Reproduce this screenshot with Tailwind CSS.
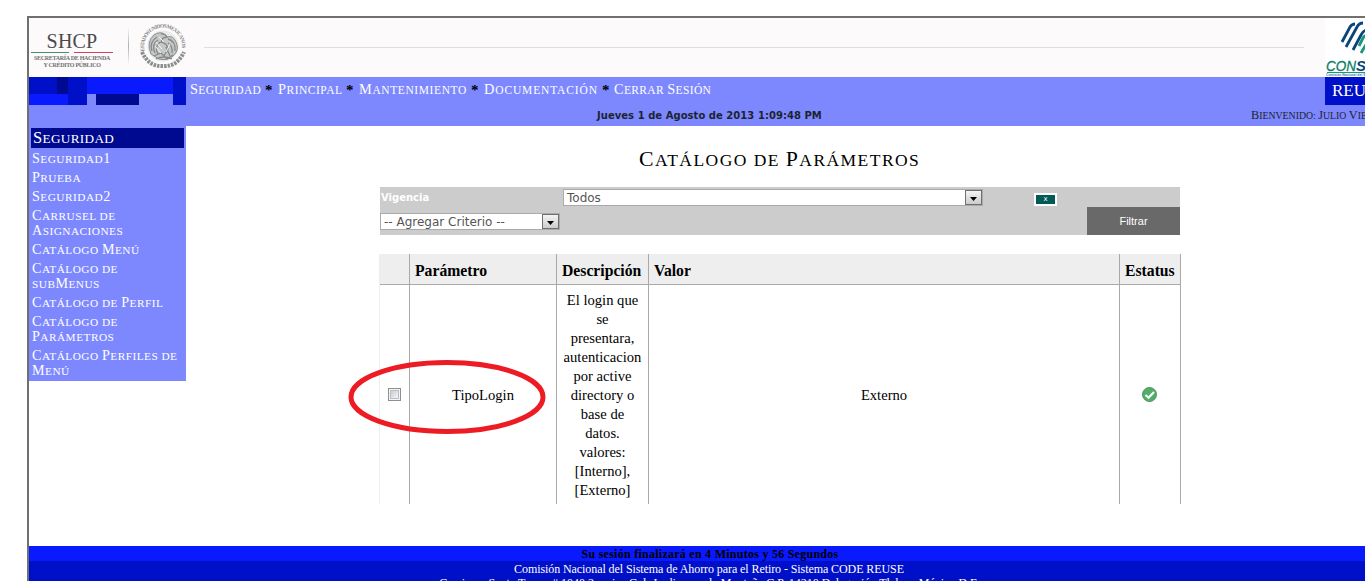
<!DOCTYPE html>
<html lang="es">
<head>
<meta charset="utf-8">
<title>Catálogo de Parámetros</title>
<script src="https://cdn.jsdelivr.net/npm/@tailwindcss/browser@4"></script>
</head>
<body class="h-[581px] w-[1365px] overflow-hidden bg-white pl-[27px] pt-4 font-['Liberation_Serif',serif] text-black">
<div class="relative flex h-[565px] w-[1338px] flex-col overflow-hidden border-l-2 border-t-2 border-[#707070]">

  <header class="flex h-[59px] shrink-0 bg-[#fcfafb]">
    <div class="w-[84px] shrink-0 pl-[2px] pt-[13px] text-center text-[#4a4a4a]">
      <div class="text-[20px] leading-[21px] tracking-[0.2px]">SHCP</div>
      <div class="flex justify-between"><i class="h-px w-[38px] bg-[#3f9468]"></i><i class="h-px w-[39px] bg-[#d4405f]"></i></div>
      <div class="whitespace-nowrap pt-[2px] text-[6px] font-bold leading-[6.500px] tracking-[-0.3px] text-[#707070]">SECRETARÍA DE HACIENDA<br>Y CRÉDITO PÚBLICO</div>
    </div>
    <div class="ml-[15px] mt-[9px] h-[38px] w-px shrink-0 bg-linear-to-b from-transparent via-[#b0b0b0] to-transparent"></div>
    <svg class="ml-[10px] mt-[4px] shrink-0" width="48" height="48" viewBox="0 0 48 48" fill="none" stroke="#8b8f8d">
      <defs><path id="arc" d="M5.500 29A19 19 0 1 1 42.500 29"/></defs>
      <circle cx="24" cy="24" r="15.500" fill="#e9e9e8" stroke="none"/>
      <text font-size="5.400" font-weight="bold" fill="#858987" stroke="none" textLength="65" font-family="Liberation Serif"><textPath href="#arc">ESTADOS UNIDOS MEXICANOS</textPath></text>
      <path d="M3 30Q10 45 24 44Q38 45 45 30" stroke-width="4" stroke-dasharray="2.500 1"/>
      <path d="M12 32Q7 20 15 13Q21 9 25 12L28 15Q34 13 37 20Q41 28 34 34Q29 39 20 37Z" fill="#c6c8c7"/>
      <path d="M13 29Q10 20 18 15M16 31Q12 22 19 18M19 32Q15 25 21 20M22 12Q26 11 28 15L24 16L22 20Q28 21 29 27L25 34M29 17Q37 19 36 29M29 21Q34 24 33 31M27 25L31 34M15 34L22 31L28 37L34 33M17 37Q25 33 33 37" stroke-width="1.300" stroke="#858987"/>
      <path d="M17 20L23 27M16 24L22 31M31 22L27 30M20 15L25 20" stroke="#f4f4f4"/>
    </svg>
    <div class="ml-[17px] mt-[29px] h-px w-[1100px] shrink-0 bg-[#dedede]"></div>
    <div class="ml-[21px] w-[50px] shrink-0 overflow-hidden bg-white">
      <svg width="50" height="59" viewBox="0 0 50 59" fill="none">
        <path d="M17 24L25 9Q27 6 30 6M21 29L32 9Q34 5 38 5M28 32L36 17Q38 13 41 12" stroke="#08457d" stroke-width="2.800"/>
        <path d="M34 28L38 20Q39 18 42 17M36 35L42 25" stroke="#16987a" stroke-width="2.800"/>
        <text x="1" y="53" font-family="Liberation Sans" font-size="15" font-style="italic" fill="#078066" stroke="#078066" stroke-width=".3" textLength="30" lengthAdjust="spacingAndGlyphs">CON</text>
        <text x="31" y="53" font-family="Liberation Sans" font-size="15" font-style="italic" font-weight="bold" fill="#08457d">SAR</text>
        <path d="M2 54.500H50" stroke="#16987a"/>
        <text x="1" y="58" font-family="Liberation Sans" font-size="4" font-weight="bold" fill="#3b76a8" textLength="55" lengthAdjust="spacingAndGlyphs">Comisión Nacional del Sistema de</text>
      </svg>
    </div>
  </header>

  <div class="flex h-[49px] shrink-0 bg-[#7d88ff]">
    <div class="w-[157px] shrink-0">
      <div class="flex h-[17px]"><i class="w-7 bg-[#0010c8]"></i><i class="w-[11px] bg-[#000a90]"></i><i class="w-[19px] bg-[#0010c8]"></i><i class="w-[86px] bg-[#0a1aff]"></i><i class="w-[13px] bg-[#0010c8]"></i></div>
      <div class="flex h-[11px]"><i class="w-[39px] bg-[#0a1aff]"></i><i class="w-[19px] bg-[#0010c8]"></i><i class="ml-[9px] w-[43px] bg-[#000a90]"></i><i class="ml-auto w-[13px] bg-[#0010c8]"></i></div>
    </div>
    <div class="flex w-[1181px] flex-col">
      <div class="flex h-7">
        <nav class="flex whitespace-nowrap pl-[4px] pt-[4px] text-[11.500px] leading-[18px] text-white uppercase">
          <a data-caps class="w-[75px] tracking-[0.35px]">Seguridad</a><b class="w-[13px] text-[15px] text-black">*</b>
          <a data-caps class="w-[68px] tracking-[0.5px]">Principal</a><b class="w-[13px] text-[15px] text-black">*</b>
          <a data-caps class="w-[112px] tracking-[0.6px]">Mantenimiento</a><b class="w-[13px] text-[15px] text-black">*</b>
          <a data-caps class="w-[118px] tracking-[0.85px]">Documentación</a><b class="w-[12px] text-[15px] text-black">*</b>
          <a data-caps class="tracking-[0.35px]">Cerrar Sesión</a>
        </nav>
        <div class="ml-auto w-[42px] overflow-hidden whitespace-nowrap bg-[#0010c8] pl-[7px] text-[17px] leading-[28px] text-white">REUSE</div>
      </div>
      <div class="flex whitespace-nowrap pt-[3px] leading-[14px]">
        <div class="w-[1065px] shrink-0 pl-[411px] pt-px font-['DejaVu_Sans',sans-serif] text-[10px] font-bold tracking-[0.04px] text-[#1c2430]">Jueves 1 de Agosto de 2013 1:09:48 PM</div>
        <div data-caps class="pt-px text-[9.800px] text-[#1c2430] uppercase">Bienvenido: Julio Vielma</div>
      </div>
    </div>
  </div>

  <main class="flex h-[420px] shrink-0">
    <aside class="h-[255px] w-[157px] shrink-0 whitespace-nowrap bg-[#7d88ff] pt-[2px] text-white uppercase">
      <h2 data-caps class="ml-[2px] h-5 w-[153px] bg-[#000a90] pl-[2px] pt-px text-[13.200px] leading-[20px] tracking-[0.35px]">Seguridad</h2>
      <ul class="flex flex-col gap-1 pl-[3px] pt-[4px] text-[11.300px] leading-[15px] tracking-[0.48px]">
        <li data-caps>Seguridad1</li><li data-caps>Prueba</li><li data-caps>Seguridad2</li><li data-caps>Carrusel de<br>Asignaciones</li><li data-caps>Catálogo Menú</li><li data-caps>Catálogo de<br>subMenus</li><li data-caps>Catálogo de Perfil</li><li data-caps>Catálogo de<br>Parámetros</li><li data-caps>Catálogo Perfiles de<br>Menú</li>
      </ul>
    </aside>
    <section class="w-[995px] shrink-0 pl-[193px]">
      <h1 data-caps class="mt-[21px] h-[40px] whitespace-nowrap pl-[260px] text-[17.500px] leading-[26px] tracking-[1.450px] uppercase">Catálogo de Parámetros</h1>
      <div class="ml-px h-12 w-[800px] bg-[#ccc] font-['DejaVu_Sans',sans-serif] text-[12px] text-[#555]">
        <div class="flex h-5 items-start">
          <b class="w-[183px] pl-px pt-[3px] text-[10px] leading-[16px] text-white">Vigencia</b>
          <div class="mt-[2px] flex h-[17px] w-[420px] items-center justify-between border border-[#aaa] bg-white pl-[3px]"><span>Todos</span>
            <span class="flex h-[15px] w-[17px] items-center justify-center border border-[#707070] bg-linear-to-b from-[#f4f4f4] to-[#ccc]"><svg class="mt-[3px]" width="7" height="4"><path d="M0 0H7L3.500 4Z"/></svg></span></div>
          <div class="ml-[51px] mt-[6px] h-[13px] w-[23px] border-2 border-white bg-[#005a55] text-center text-[7px] leading-[8px] text-white">x</div>
        </div>
        <div class="flex h-7 justify-between">
          <div class="mt-[6px] flex h-[17px] w-[180px] items-center justify-between border border-[#aaa] bg-white pl-[3px]">-- Agregar Criterio --
            <span class="flex h-[15px] w-[17px] items-center justify-center border border-[#707070] bg-linear-to-b from-[#f4f4f4] to-[#ccc]"><svg class="mt-[3px]" width="7" height="4"><path d="M0 0H7L3.500 4Z"/></svg></span></div>
          <button class="h-7 w-[93px] bg-[#696969] font-['Liberation_Sans',sans-serif] text-[11px] text-white">Filtrar</button>
        </div>
      </div>
      <table class="mt-[19px] w-[802px] table-fixed border-separate border-spacing-0 border-l border-[#eee] text-[15.700px] leading-[19px]">
        <colgroup><col class="w-[30px]"><col class="w-[147px]"><col class="w-[92px]"><col class="w-[471px]"><col class="w-[61px]"></colgroup>
        <thead class="bg-[#eee] text-left"><tr class="h-[31px] [&>th]:border-b [&>th]:border-r [&>th]:border-[#a9a9a9] [&>th]:p-0 [&>th]:pt-[2px] [&>th]:pl-[5px]"><th></th><th>Parámetro</th><th>Descripción</th><th>Valor</th><th>Estatus</th></tr></thead>
        <tbody><tr class="h-[219px] text-center text-[14.600px] [&>td]:border-r [&>td]:border-[#a9a9a9] [&>td]:p-0 [&>td]:pt-[2px]">
          <td><span class="relative -top-px mx-auto block size-[13px] border border-[#8e8f8f] bg-[#f4f4f4] p-px"><i class="block size-[9px] border border-[#bbbfc6] bg-linear-to-br from-[#c8ccd4] to-[#f6f6f6]"></i></span></td>
          <td>TipoLogin</td>
          <td>El login que<br>se<br>presentara,<br>autenticacion<br>por active<br>directory o<br>base de<br>datos.<br>valores:<br>[Interno],<br>[Externo]</td>
          <td>Externo</td>
          <td><svg class="relative -top-px mx-auto" width="16" height="16" viewBox="0 0 16 16"><circle cx="7.500" cy="7.500" r="7" fill="#4fae68" stroke="#5a8f66"/><path d="M3.500 8L6.500 10.800L12 5" fill="none" stroke="white" stroke-width="2.200"/></svg></td>
        </tr></tbody>
      </table>
    </section>
  </main>

  <footer class="h-[60px] shrink-0 whitespace-nowrap bg-[#0010c8] text-center text-[12px] leading-[15px] text-white">
    <div class="h-[15px] bg-[#0a1aff] pl-[26px] text-[12px] font-bold leading-[17px] tracking-[0.26px] text-black">Su sesión finalizará en 4 Minutos y 56 Segundos</div>
    <div class="pl-[24px] pt-px tracking-[-0.08px]">Comisión Nacional del Sistema de Ahorro para el Retiro - Sistema CODE REUSE</div>
    <div class="-mt-px pl-[24px]">Camino a Santa Teresa # 1040 2o. piso Col. Jardines en la Montaña C.P. 14210 Delegación Tlalpan México D.F.</div>
  </footer>

  <svg class="absolute left-[319px] top-[340px]" width="200" height="80" viewBox="0 0 200 80"><ellipse cx="99" cy="39" rx="96" ry="34.500" fill="none" stroke="#ed1c24" stroke-width="5"/></svg>
</div>
<script>
  // Enlarge the capitals and digits of uppercase labels so they read as small caps.
  document.querySelectorAll('[data-caps]').forEach(function (el) {
    el.innerHTML = el.innerHTML.replace(/<br>|[A-Z0-9]/g, function (m) {
      return m === '<br>' ? m : '<span class="text-[1.25em] leading-[0]">' + m + '</span>';
    });
  });
</script>
</body>
</html>
